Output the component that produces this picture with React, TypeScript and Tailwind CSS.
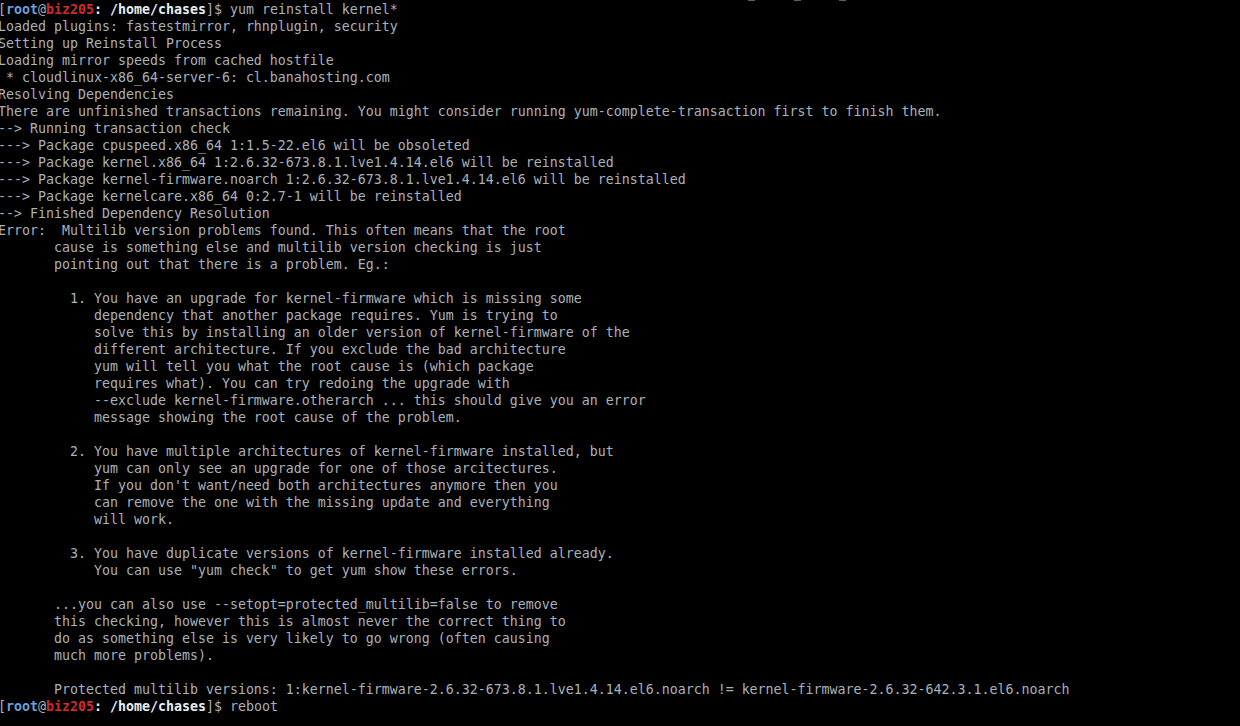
const output = [
  "Loaded plugins: fastestmirror, rhnplugin, security",
  "Setting up Reinstall Process",
  "Loading mirror speeds from cached hostfile",
  " * cloudlinux-x86_64-server-6: cl.banahosting.com",
  "Resolving Dependencies",
  "There are unfinished transactions remaining. You might consider running yum-complete-transaction first to finish them.",
  "--> Running transaction check",
  "---> Package cpuspeed.x86_64 1:1.5-22.el6 will be obsoleted",
  "---> Package kernel.x86_64 1:2.6.32-673.8.1.lve1.4.14.el6 will be reinstalled",
  "---> Package kernel-firmware.noarch 1:2.6.32-673.8.1.lve1.4.14.el6 will be reinstalled",
  "---> Package kernelcare.x86_64 0:2.7-1 will be reinstalled",
  "--> Finished Dependency Resolution",
  "Error:  Multilib version problems found. This often means that the root",
  "       cause is something else and multilib version checking is just",
  "       pointing out that there is a problem. Eg.:",
  "",
  "         1. You have an upgrade for kernel-firmware which is missing some",
  "            dependency that another package requires. Yum is trying to",
  "            solve this by installing an older version of kernel-firmware of the",
  "            different architecture. If you exclude the bad architecture",
  "            yum will tell you what the root cause is (which package",
  "            requires what). You can try redoing the upgrade with",
  "            --exclude kernel-firmware.otherarch ... this should give you an error",
  "            message showing the root cause of the problem.",
  "",
  "         2. You have multiple architectures of kernel-firmware installed, but",
  "            yum can only see an upgrade for one of those arcitectures.",
  "            If you don't want/need both architectures anymore then you",
  "            can remove the one with the missing update and everything",
  "            will work.",
  "",
  "         3. You have duplicate versions of kernel-firmware installed already.",
  "            You can use \"yum check\" to get yum show these errors.",
  "",
  "       ...you can also use --setopt=protected_multilib=false to remove",
  "       this checking, however this is almost never the correct thing to",
  "       do as something else is very likely to go wrong (often causing",
  "       much more problems).",
  "",
  "       Protected multilib versions: 1:kernel-firmware-2.6.32-673.8.1.lve1.4.14.el6.noarch != kernel-firmware-2.6.32-642.3.1.el6.noarch",
];

function Prompt({ cmd }: { cmd: string }) {
  return (
    <div className="h-[17px]">
      <span>[</span>
      <span className="font-bold text-[#6d9fd9]">root</span>
      <span>@</span>
      <span className="font-bold text-[#d02a2a]">biz205</span>
      <span className="font-bold text-[#e6eef4]">: /home/chases</span>
      <span>]$ {cmd}</span>
    </div>
  );
}

export default function App() {
  return (
    <div className="relative w-[1240px] h-[726px] overflow-hidden bg-black">
      {/* bits of the scrolled-off line above */}
      <span className="absolute top-0 left-[748px] w-[7px] h-px bg-[#5a5f64]" />
      <span className="absolute top-0 left-[794px] w-[7px] h-px bg-[#5a5f64]" />
      <span className="absolute top-0 left-[839px] w-[7px] h-px bg-[#5a5f64]" />

      <div className="flex flex-col pt-px -ml-[2px] whitespace-pre font-['DejaVu_Sans_Mono',monospace] text-[13.29px] leading-[17px] text-[#aab2b9]">
        <Prompt cmd="yum reinstall kernel*" />
        {output.map((line, i) => (
          <div key={i} className="h-[17px]">
            {line}
          </div>
        ))}
        <Prompt cmd="reboot" />
      </div>
    </div>
  );
}
